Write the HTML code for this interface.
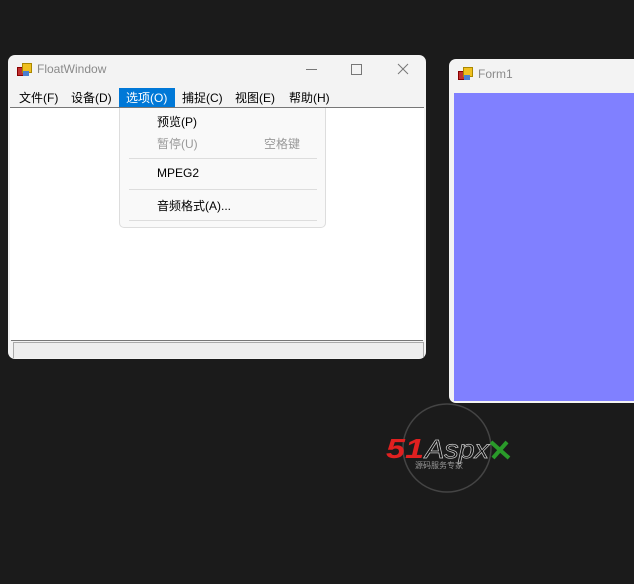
<!DOCTYPE html>
<html><head><meta charset="utf-8"><style>
body{margin:0;width:634px;height:584px;background:#1b1b1b;position:relative;overflow:hidden;font-family:"Liberation Sans","Noto Sans CJK SC",sans-serif;font-size:12px;color:#000}
.a{position:absolute}
.ico{position:absolute;width:14px;height:14px}
.ico i{position:absolute;display:block}
</style></head><body>
<!-- FloatWindow -->
<div class="a" style="left:8px;top:55px;width:418px;height:304px;background:#f3f3f3;border-radius:7px;overflow:hidden">
  <div class="ico" style="left:9px;top:8px">
    <i style="left:0;top:4px;width:7px;height:7px;background:#c03030;border:1px solid #800"></i>
    <i style="left:5px;top:0;width:8px;height:8px;background:#f0c020;border:1px solid #a80"></i>
    <i style="left:6px;top:8px;width:6px;height:5px;background:#4a7fd0"></i>
  </div>
  <div class="a" style="left:29px;top:7px;font-size:12px;color:#8a8a8a">FloatWindow</div>
  <div class="a" style="left:298px;top:14px;width:11px;height:1px;background:#777"></div>
  <div class="a" style="left:343px;top:9px;width:9px;height:9px;border:1px solid #777"></div>
  <svg class="a" style="left:389px;top:8px" width="12" height="12"><path d="M1 1L11 11M11 1L1 11" stroke="#777" stroke-width="1"/></svg>
  <div class="a" style="left:111px;top:33px;width:56px;height:19px;background:#0078d7"></div>
  <div class="a" style="top:34px;left:11px;white-space:nowrap">文件(F)</div>
  <div class="a" style="top:34px;left:63px">设备(D)</div>
  <div class="a" style="top:34px;left:118px;color:#fff">选项(O)</div>
  <div class="a" style="top:34px;left:174px">捕捉(C)</div>
  <div class="a" style="top:34px;left:227px">视图(E)</div>
  <div class="a" style="top:34px;left:281px">帮助(H)</div>
  <div class="a" style="left:2px;top:52px;width:414px;height:1px;background:#777"></div>
  <div class="a" style="left:2px;top:53px;width:414px;height:232px;background:#fff"></div>
  <div class="a" style="left:3px;top:285px;width:412px;height:1px;background:#777"></div>
  <div class="a" style="left:5px;top:287px;width:409px;height:15px;background:#eee;border:1px solid #aaa;border-bottom:none"></div>
</div>
<!-- dropdown -->
<div class="a" style="left:119px;top:108px;width:205px;height:119px;background:#f9f9f9;border:1px solid #ddd;border-top:none;border-radius:0 0 5px 5px">
  <div class="a" style="left:37px;top:5px">预览(P)</div>
  <div class="a" style="left:37px;top:27px;color:#999">暂停(U)</div>
  <div class="a" style="left:144px;top:27px;color:#999">空格键</div>
  <div class="a" style="left:9px;top:50px;width:188px;height:1px;background:#ddd"></div>
  <div class="a" style="left:37px;top:58px">MPEG2</div>
  <div class="a" style="left:9px;top:81px;width:188px;height:1px;background:#ddd"></div>
  <div class="a" style="left:37px;top:89px">音频格式(A)...</div>
  <div class="a" style="left:9px;top:112px;width:188px;height:1px;background:#ddd"></div>
</div>
<!-- Form1 -->
<div class="a" style="left:449px;top:59px;width:190px;height:344px;background:#f3f3f3;border-radius:7px 0 0 7px;overflow:hidden">
  <div class="ico" style="left:9px;top:8px">
    <i style="left:0;top:4px;width:7px;height:7px;background:#c03030;border:1px solid #800"></i>
    <i style="left:5px;top:0;width:8px;height:8px;background:#f0c020;border:1px solid #a80"></i>
    <i style="left:6px;top:8px;width:6px;height:5px;background:#4a7fd0"></i>
  </div>
  <div class="a" style="left:29px;top:8px;color:#8a8a8a">Form1</div>
  <div class="a" style="left:5px;top:34px;width:190px;height:308px;background:#8080ff"></div>
</div>
<!-- logo -->
<svg class="a" style="left:385px;top:400px" width="130" height="96">
  <circle cx="62" cy="48" r="44" fill="none" stroke="#444" stroke-width="1.5"/>
  <text x="1" y="58" font-family="Liberation Sans" font-style="italic" font-weight="bold" font-size="28" fill="#e02020" textLength="38" lengthAdjust="spacingAndGlyphs">51</text>
  <text x="40" y="58" font-family="Liberation Sans" font-style="italic" font-size="26" fill="#111" stroke="#ccc" stroke-width="0.7" textLength="64" lengthAdjust="spacingAndGlyphs">Aspx</text>
  <path d="M106 42L124 58M122 42L108 58" stroke="#2a9a2a" stroke-width="4"/>
  <text x="30" y="68" font-family="Noto Sans CJK SC" font-size="8" fill="#999">源码服务专家</text>
</svg>
</body></html>
